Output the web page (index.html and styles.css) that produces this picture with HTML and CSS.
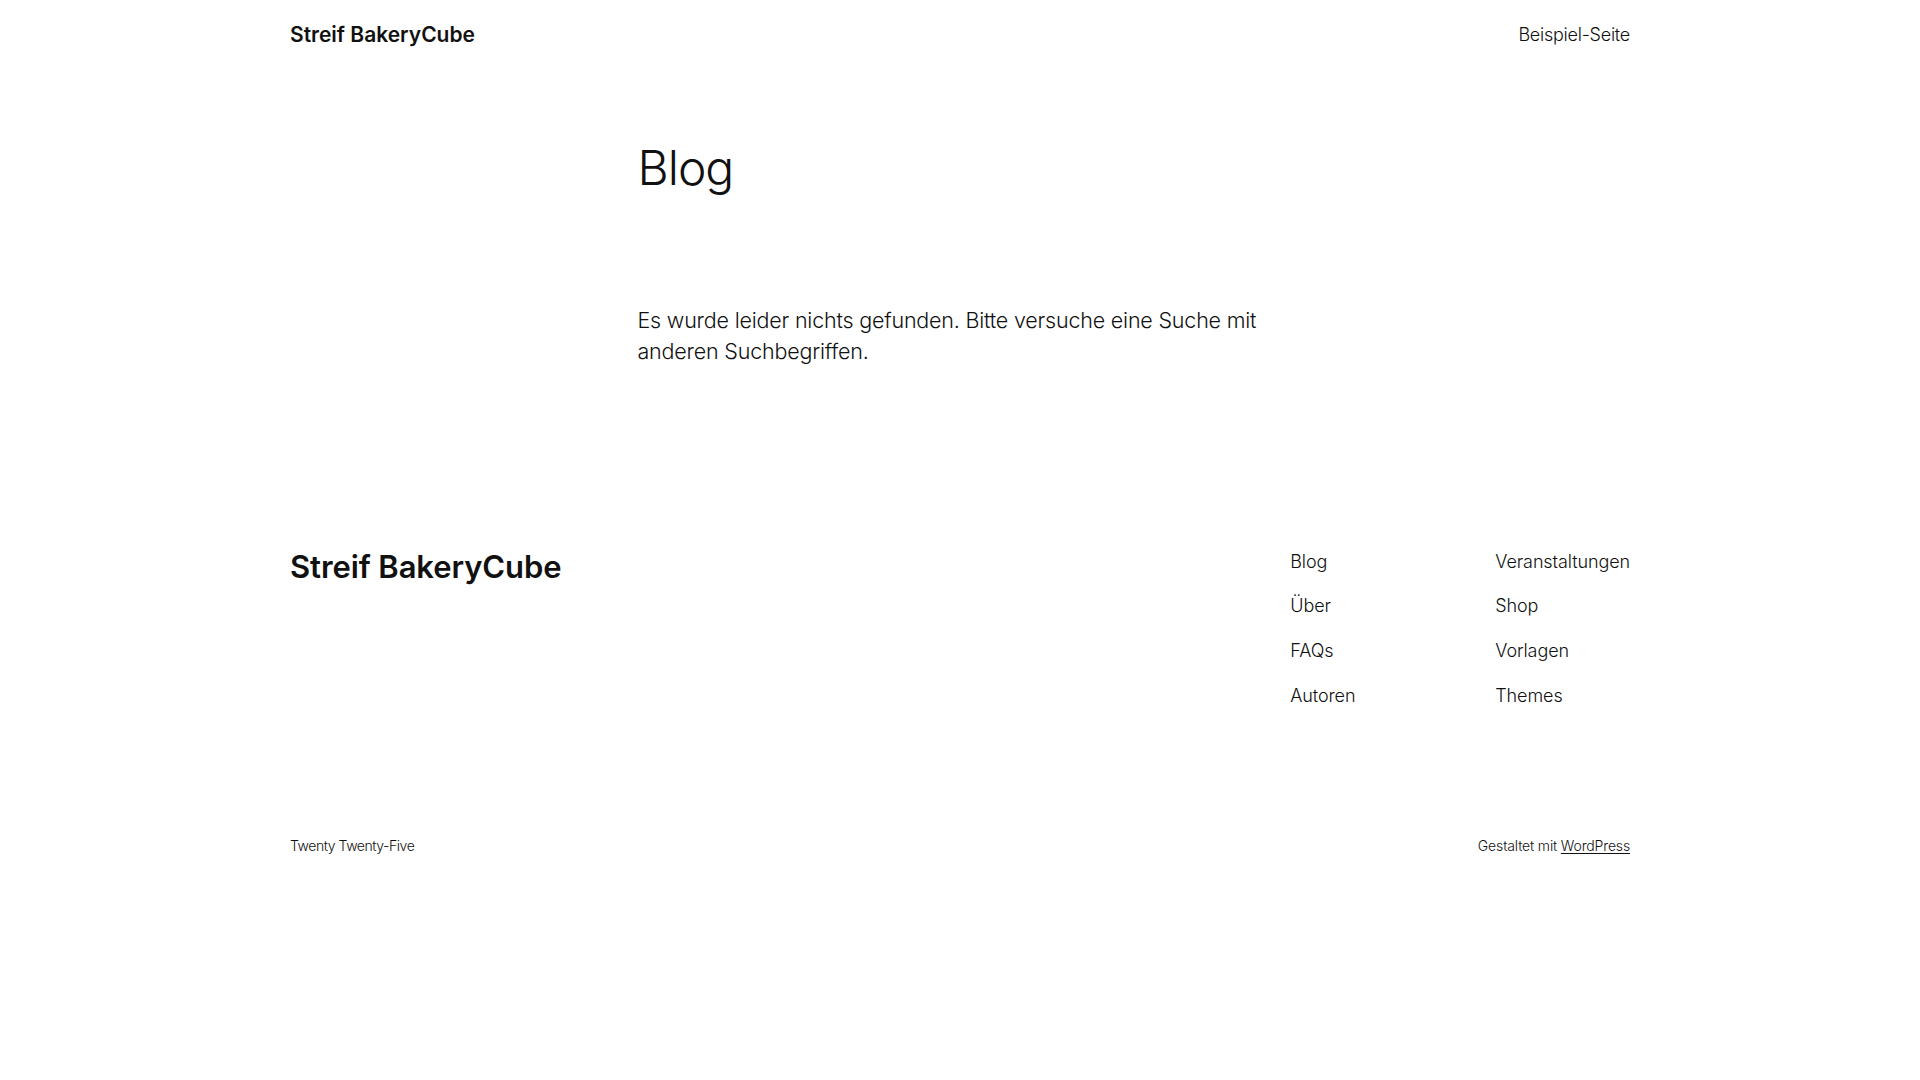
FILE: index.html
```html
<!DOCTYPE html>
<html lang="de">
<head>
<meta charset="utf-8">
<title>Blog – Streif BakeryCube</title>
<link rel="stylesheet" href="styles.css">
</head>
<body>
<header class="site-header">
  <a class="site-title" href="#">Streif BakeryCube</a>
  <nav class="header-nav"><a href="#">Beispiel-Seite</a></nav>
</header>
<main class="content">
  <h1 class="page-title">Blog</h1>
  <p class="no-results">Es wurde leider nichts gefunden. Bitte versuche eine Suche mit anderen Suchbegriffen.</p>
</main>
<footer class="site-footer">
  <div class="footer-top">
    <a class="footer-title" href="#">Streif BakeryCube</a>
    <nav class="footer-nav">
      <ul class="footer-col">
        <li><a href="#">Blog</a></li>
        <li><a href="#">Über</a></li>
        <li><a href="#">FAQs</a></li>
        <li><a href="#">Autoren</a></li>
      </ul>
      <ul class="footer-col">
        <li><a href="#">Veranstaltungen</a></li>
        <li><a href="#">Shop</a></li>
        <li><a href="#">Vorlagen</a></li>
        <li><a href="#">Themes</a></li>
      </ul>
    </nav>
  </div>
  <div class="footer-bottom">
    <span class="theme-name">Twenty Twenty-Five</span>
    <span class="credit">Gestaltet mit <a href="#">WordPress</a></span>
  </div>
</footer>
</body>
</html>
```
FILE: styles.css
```css
* { box-sizing: border-box; }
html, body { background: #ffffff; }
body {
  margin: 0;
  font-family: Inter, "Noto Sans", "Liberation Sans", sans-serif;
  color: #111111;
  -webkit-font-smoothing: antialiased;
}
a { color: inherit; text-decoration: none; }

.site-header {
  width: 1340px;
  margin: 0 auto;
  padding: 21px 0;
  display: flex;
  justify-content: space-between;
  align-items: center;
}
.site-title {
  font-size: 21px;
  line-height: 28px;
  font-weight: 600;
  letter-spacing: 0;
}
.header-nav {
  font-size: 18px;
  line-height: 28px;
  font-weight: 300;
  letter-spacing: -0.25px;
}

.content {
  width: 645px;
  margin: 0 auto;
}
.page-title {
  margin: 69px 0 0;
  font-size: 48px;
  line-height: 1.2;
  font-weight: 300;
  letter-spacing: -1px;
}
.no-results {
  margin: 108px 0 0;
  font-size: 21.5px;
  line-height: 31.5px;
  font-weight: 300;
  letter-spacing: -0.2px;
}

.site-footer {
  width: 1340px;
  margin: 181px auto 0;
}
.footer-top {
  display: flex;
  justify-content: space-between;
  align-items: flex-start;
}
.footer-title {
  font-size: 31px;
  line-height: 36px;
  font-weight: 600;
  letter-spacing: -0.1px;
}
.footer-nav {
  display: grid;
  grid-template-columns: 205px auto;
  margin-top: -1px;
}
.footer-col {
  list-style: none;
  margin: 0;
  padding: 0;
  display: flex;
  flex-direction: column;
  gap: 16.7px;
  font-size: 18px;
  line-height: 28px;
  font-weight: 300;
  letter-spacing: -0.1px;
}
.footer-bottom {
  margin-top: 126px;
  display: flex;
  justify-content: space-between;
  align-items: center;
  font-size: 14px;
  line-height: 20px;
  font-weight: 300;
  letter-spacing: -0.3px;
}
.theme-name { letter-spacing: -0.45px; }
.credit { letter-spacing: -0.15px; }
.credit a {
  text-decoration: underline;
  text-decoration-thickness: 1px;
  text-underline-offset: 2px;
}
```
